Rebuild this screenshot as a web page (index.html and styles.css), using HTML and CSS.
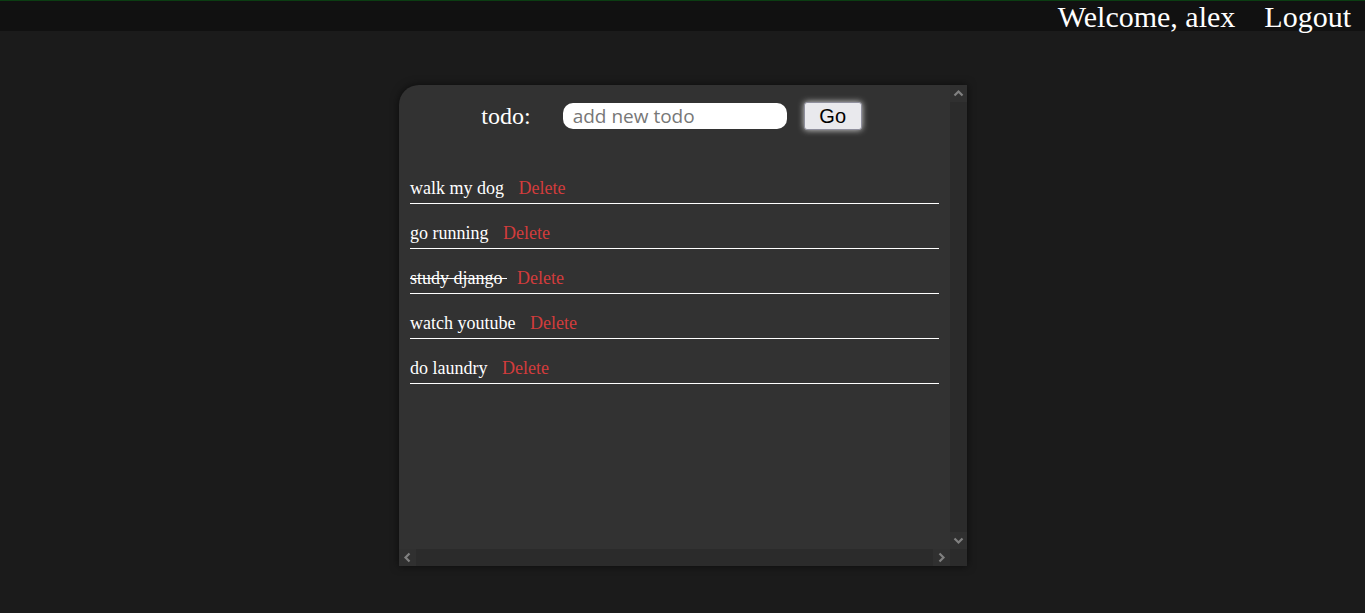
FILE: index.html
```html
<!DOCTYPE html>
<html lang="en">
<head>
<meta charset="utf-8">
<title>Todo</title>
<link rel="stylesheet" href="styles.css">
</head>
<body>
<header class="topbar">
  <span class="welcome">Welcome, alex</span>
  <a class="logout" href="#">Logout</a>
</header>
<main class="page">
  <section class="panel">
    <div class="panel-content">
      <form class="add-form">
        <label class="add-label" for="todo">todo:</label>
        <input class="add-input" id="todo" type="text" placeholder="add new todo">
        <button class="add-btn" type="button">Go</button>
      </form>
      <ul class="todo-list">
        <li class="todo-item"><span class="todo-text">walk my dog </span><a class="delete" href="#">Delete</a></li>
        <li class="todo-item"><span class="todo-text">go running </span><a class="delete" href="#">Delete</a></li>
        <li class="todo-item"><span class="todo-text done">study django </span><a class="delete" href="#">Delete</a></li>
        <li class="todo-item"><span class="todo-text">watch youtube </span><a class="delete" href="#">Delete</a></li>
        <li class="todo-item"><span class="todo-text">do laundry </span><a class="delete" href="#">Delete</a></li>
      </ul>
    </div>
    <div class="vscroll">
      <span class="sb-btn"><svg width="17" height="17" viewBox="0 0 17 17"><path d="M4.5 10.5 L8.5 6.5 L12.5 10.5" fill="none" stroke="#808080" stroke-width="2.2"/></svg></span>
      <span class="sb-track"></span>
      <span class="sb-btn"><svg width="17" height="17" viewBox="0 0 17 17"><path d="M4.5 6.5 L8.5 10.5 L12.5 6.5" fill="none" stroke="#808080" stroke-width="2.2"/></svg></span>
    </div>
    <div class="hscroll">
      <span class="sb-btn"><svg width="17" height="17" viewBox="0 0 17 17"><path d="M10.5 4.5 L6.5 8.5 L10.5 12.5" fill="none" stroke="#808080" stroke-width="2.2"/></svg></span>
      <span class="sb-track"></span>
      <span class="sb-btn"><svg width="17" height="17" viewBox="0 0 17 17"><path d="M6.5 4.5 L10.5 8.5 L6.5 12.5" fill="none" stroke="#808080" stroke-width="2.2"/></svg></span>
    </div>
    <div class="sb-corner"></div>
  </section>
</main>
</body>
</html>
```
FILE: styles.css
```css
html, body {
  margin: 0;
  padding: 0;
}
body {
  background: #1b1b1b;
  font-family: "Liberation Serif", "Times New Roman", serif;
  color: #ffffff;
  min-height: 613px;
}
.topbar {
  height: 30px;
  background: #111111;
  border-top: 1px solid #0b3d12;
  display: flex;
  justify-content: flex-end;
  align-items: flex-start;
  gap: 29px;
  padding-right: 14px;
  font-size: 30px;
  line-height: 32px;
  overflow: visible;
}
.welcome {
  color: #ffffff;
}
.logout {
  color: #ffffff;
  text-decoration: none;
}
.page {
  display: flex;
  justify-content: center;
  padding-top: 54px;
}
.panel {
  width: 568px;
  height: 481px;
  margin-left: 1px;
  background: #323232;
  border-top-left-radius: 20px;
  overflow: hidden;
  box-shadow: 0 0 8px rgba(0, 0, 0, 0.6);
  display: grid;
  grid-template-columns: 1fr 17px;
  grid-template-rows: 1fr 17px;
}
.panel-content {
  padding: 0 11px;
  overflow: hidden;
}
.vscroll {
  display: flex;
  flex-direction: column;
  background: #2b2b2b;
}
.hscroll {
  display: flex;
  flex-direction: row;
  background: #2b2b2b;
}
.sb-btn {
  width: 17px;
  height: 17px;
  flex: 0 0 17px;
  background: #303030;
  display: block;
}
.sb-btn svg {
  display: block;
}
.sb-track {
  flex: 1;
}
.sb-corner {
  background: #2b2b2b;
}
.add-form {
  display: flex;
  align-items: center;
  justify-content: center;
  height: 28px;
  margin-top: 17px;
}
.add-label {
  font-size: 24px;
  color: #ffffff;
  margin-right: 32px;
}
.add-input {
  width: 224px;
  height: 26px;
  box-sizing: border-box;
  border: none;
  border-radius: 10px;
  background: #ffffff;
  padding: 0 10px;
  font-family: "Open Sans", "Noto Sans", sans-serif;
  font-size: 19px;
  color: #000;
  outline: none;
}
.add-input::placeholder {
  color: #777777;
}
.add-btn {
  margin-left: 17px;
  margin-right: 6px;
  width: 58px;
  height: 28px;
  box-sizing: border-box;
  background: #e9e9ed;
  border: 1px solid #8f8f9d;
  border-radius: 3px;
  font-family: "Liberation Sans", Arial, sans-serif;
  font-size: 20px;
  line-height: 24px;
  color: #000;
  padding: 0;
  box-shadow: 0 0 6px rgba(255, 255, 255, 0.8);
}
.todo-list {
  list-style: none;
  margin: 0;
  padding: 29px 0 0 0;
}
.todo-item {
  margin-top: 18px;
  line-height: 20px;
  font-size: 18px;
  padding-top: 1px;
  padding-bottom: 5px;
  border-bottom: 1px solid #ffffff;
}
.todo-text {
  color: #ffffff;
}
.todo-text.done {
  text-decoration: line-through;
}
.delete {
  color: #d23c3c;
  text-decoration: none;
  margin-left: 10px;
}
```
